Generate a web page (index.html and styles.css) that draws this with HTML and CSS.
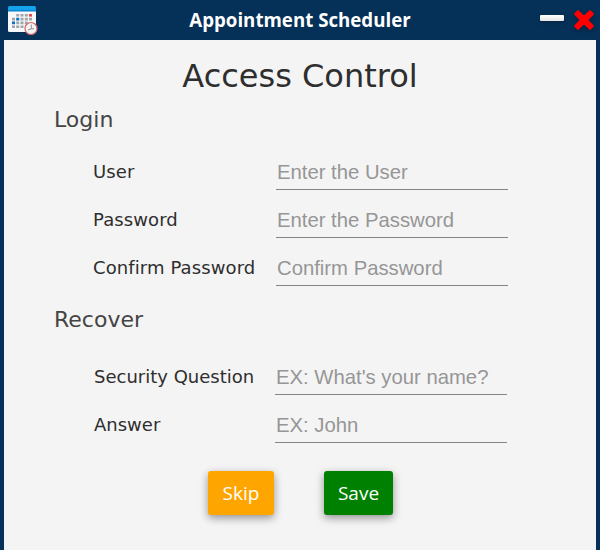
FILE: index.html
```html
<!DOCTYPE html>
<html lang="en">
<head>
<meta charset="utf-8">
<title>Appointment Scheduler</title>
<link rel="stylesheet" href="styles.css">
</head>
<body>
<div class="window">
  <header class="titlebar">
    <svg class="app-icon" width="32" height="32" viewBox="0 0 32 32">
      <path d="M0 3h28v21.500q0 1.500-1.500 1.500h-25Q0 26 0 24.500z" fill="#f6f8f9"/>
      <path d="M1.500 0h25Q28 0 28 1.500V5H0V1.500Q0 0 1.500 0z" fill="#14a2ea"/>
      <path d="M0 4.200h28v1.300H0z" fill="#087fd0"/>
      <path d="M8.200 8h3v2.600h-3zM12.500 8h3v2.600h-3zM16.800 8h3v2.600h-3zM4 11.800h3v2.600H4zM12.500 11.800h3v2.600h-3zM16.800 11.800h3v2.600h-3zM21 11.800h3v2.600h-3zM8.200 15.600h3v2.600h-3zM12.500 15.600h3v2.600h-3zM16.800 15.600h3v2.600h-3zM4 19.400h3V22H4zM8.200 19.400h3V22h-3zM12.500 19.400h3V22h-3z" fill="#a2a6a9"/>
      <path d="M8.200 11.800h3v2.600h-3zM4 15.600h3v2.600H4z" fill="#0870c4"/>
      <path d="M21 8h3v2.600h-3z" fill="#ed4545"/>
      <circle cx="23" cy="22.500" r="6" fill="#f4f4f4" stroke="#dc6466" stroke-width="1.200"/>
      <path d="M23.300 18.500v4.300h2.700M23.300 22.800l-3.300 1.200" fill="none" stroke="#8b8585" stroke-width=".9"/>
    </svg>
    <h1 class="window-title">Appointment Scheduler</h1>
    <div class="controls">
      <span class="minimize"></span>
      <svg class="close" width="22" height="22" viewBox="0 0 22 22">
        <path d="M5 1.800L11 7.500 17 1.800 20.200 5 14.500 11 20.200 17 17 20.200 11 14.500 5 20.200 1.800 17 7.500 11 1.800 5z" fill="#f00" stroke="#f00" stroke-width="1.500" stroke-linejoin="round"/>
      </svg>
    </div>
  </header>
  <main class="content">
    <h2 class="heading">Access Control</h2>
    <h3 class="section">Login</h3>
    <div class="fields login">
      <label class="row"><span class="label">User</span><input class="input" placeholder="Enter the User"></label>
      <label class="row"><span class="label">Password</span><input class="input" placeholder="Enter the Password"></label>
      <label class="row"><span class="label">Confirm Password</span><input class="input" placeholder="Confirm Password"></label>
    </div>
    <h3 class="section">Recover</h3>
    <div class="fields recover">
      <label class="row"><span class="label">Security Question</span><input class="input" placeholder="EX: What's your name?"></label>
      <label class="row"><span class="label">Answer</span><input class="input" placeholder="EX: John"></label>
    </div>
    <div class="actions">
      <button class="button skip">Skip</button>
      <button class="button save">Save</button>
    </div>
  </main>
</div>
</body>
</html>
```
FILE: styles.css
```css
* { box-sizing: border-box; }
body { margin: 0; }
h1, h2, h3 { margin: 0; font-weight: 400; }
.window {
  width: 600px;
  height: 550px;
  padding: 0 4px;
  overflow: hidden;
  background: #053057;
  font-family: "DejaVu Sans", sans-serif;
}
.titlebar {
  display: grid;
  grid-template-columns: 60px 1fr 60px;
  align-items: center;
  height: 40px;
}
.app-icon { margin-left: 4px; margin-top: 4px; }
.window-title {
  color: #fff;
  font: 700 18.7px/40px "Open Sans", sans-serif;
  text-align: center;
  white-space: nowrap;
}
.controls { display: flex; align-items: center; gap: 9px; padding-left: 4px; }
.minimize {
  flex: none;
  width: 24px;
  height: 6px;
  margin-top: -4px;
  border-radius: 1px;
  background: linear-gradient(#fff, #e4e4e6);
  box-shadow: 0 2px 5px #0003;
}
.close { flex: none; filter: drop-shadow(0 2px 2px #0004); }
.content { height: 510px; background: #f4f4f4; }
.heading {
  padding-top: 12px;
  color: #2e2e2e;
  font-size: 32px;
  line-height: 48px;
  text-align: center;
}
.section {
  margin-left: 50px;
  color: #444;
  font-size: 22px;
  line-height: 40px;
}
.fields { display: flex; flex-direction: column; gap: 11px; }
.login { margin: 13px 0 14px 89px; }
.recover { margin: 18px 0 0 90px; }
.row { display: flex; height: 37px; }
.label {
  flex: 0 0 183px;
  color: #2e2e2e;
  font-size: 18px;
  line-height: 37px;
  white-space: nowrap;
}
.login .label { letter-spacing: .1px; }
.recover .label { flex-basis: 181px; }
.input {
  width: 232px;
  padding: 3px 1px 0;
  border: 0;
  border-bottom: 1px solid #858585;
  border-radius: 0;
  outline: 0;
  background: transparent;
  color: #333;
  font: 20.3px "Liberation Sans", sans-serif;
}
.input::placeholder { color: #969696; opacity: 1; }
.actions { display: flex; gap: 50px; margin: 28px 0 0 204px; }
.button {
  height: 44px;
  padding: 0;
  border: 0;
  border-radius: 3px;
  color: #fff;
  font: 19px "Open Sans", sans-serif;
  box-shadow: 0 3px 8px #0006;
}
.skip { width: 66px; background: #ffa500; }
.save { width: 69px; background: #008000; }
```
